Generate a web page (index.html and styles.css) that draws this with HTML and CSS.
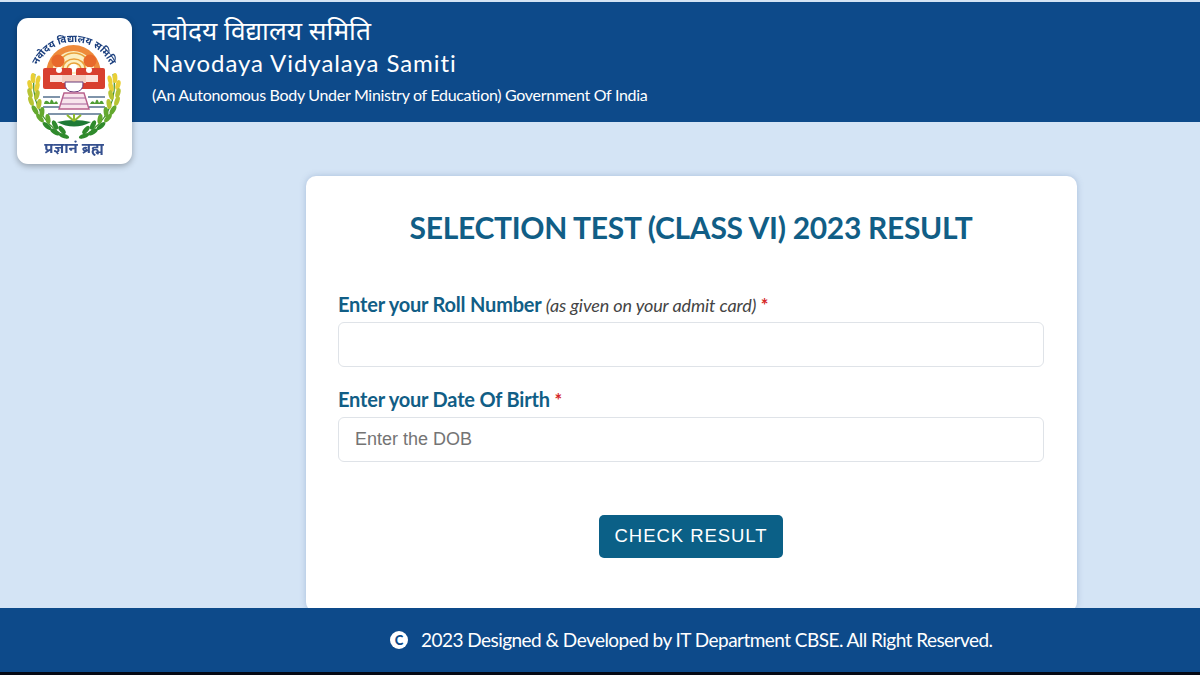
FILE: index.html
```html
<!DOCTYPE html>
<html lang="en">
<head>
<meta charset="utf-8">
<title>Navodaya Vidyalaya Samiti</title>
<link rel="stylesheet" href="styles.css">
</head>
<body>
<div class="page">
  <header class="header">
    <div class="logo-card">
      <svg class="logo" viewBox="0 0 115 146" width="115" height="146" aria-label="NVS logo">
        <defs>
          <path id="arcTop" d="M17 64 A40 40 0 0 1 97 64"/>
          <g id="wreath">
            <path d="M18 56 C13 78 22 104 50 120" fill="none" stroke="#3f8f2a" stroke-width="1.2"/>
            <g fill="#e9cf36">
              <ellipse cx="16" cy="60" rx="2.4" ry="5"/><ellipse cx="21" cy="62" rx="2.2" ry="4.6" transform="rotate(15 21 62)"/>
              <ellipse cx="13" cy="67" rx="2.4" ry="5" transform="rotate(-15 13 67)"/><ellipse cx="20" cy="69" rx="2.4" ry="5" transform="rotate(15 20 69)"/>
            </g>
            <g fill="#b7c333">
              <ellipse cx="13" cy="75" rx="2.4" ry="5" transform="rotate(-15 13 75)"/><ellipse cx="20" cy="77" rx="2.4" ry="5" transform="rotate(15 20 77)"/>
              <ellipse cx="14" cy="83" rx="2.4" ry="5" transform="rotate(-20 14 83)"/><ellipse cx="22" cy="86" rx="2.4" ry="5" transform="rotate(10 22 86)"/>
            </g>
            <g fill="#63a82e">
              <ellipse cx="18" cy="92" rx="2.4" ry="5.2" transform="rotate(-30 18 92)"/><ellipse cx="25" cy="94" rx="2.4" ry="5" transform="rotate(5 25 94)"/>
              <ellipse cx="23" cy="100" rx="2.4" ry="5.4" transform="rotate(-40 23 100)"/><ellipse cx="31" cy="101" rx="2.4" ry="5" transform="rotate(-10 31 101)"/>
            </g>
            <g fill="#2f8a2c">
              <ellipse cx="30" cy="108" rx="2.4" ry="5.4" transform="rotate(-50 30 108)"/><ellipse cx="38" cy="107" rx="2.4" ry="5" transform="rotate(-25 38 107)"/>
              <ellipse cx="38" cy="114" rx="2.4" ry="5.4" transform="rotate(-60 38 114)"/><ellipse cx="45" cy="112" rx="2.4" ry="5" transform="rotate(-40 45 112)"/>
              <ellipse cx="47" cy="118" rx="2.2" ry="5.4" transform="rotate(-70 47 118)"/>
            </g>
          </g>
        </defs>
        <text class="logo-hi"><textPath href="#arcTop" startOffset="50%" text-anchor="middle">नवोदय विद्यालय समिति</textPath></text>
        <path d="M29 56 A27.500 29 0 0 1 84 56 Z" fill="#ee8a3a"/>
        <path d="M35 56 A21.500 23 0 0 1 78 56 Z" fill="#fbeec0"/>
        <path d="M42 48 A15 13 0 0 1 72 48 M46 50 A11 9 0 0 1 68 50 M50 51 A7 6 0 0 1 64 51" fill="none" stroke="#e9a13a" stroke-width="1.6"/>
        <circle cx="41" cy="43" r="6.500" fill="#e8692b"/>
        <circle cx="73" cy="43" r="6.500" fill="#e8692b"/>
        <circle cx="56.500" cy="50" r="4" fill="#fff"/>
        <rect x="26" y="50" width="29" height="21" rx="2" fill="#d8402f"/>
        <rect x="59" y="50" width="29" height="21" rx="2" fill="#d8402f"/>
        <circle cx="42" cy="52" r="3" fill="#fff"/>
        <circle cx="72" cy="52" r="3" fill="#fff"/>
        <rect x="33" y="57" width="17" height="7" fill="#fbe3dc"/>
        <rect x="64" y="57" width="17" height="7" fill="#fbe3dc"/>
        <path d="M45 57 H69 V65 H45 Z" fill="#f5cfc2"/>
        <path d="M48 64 H66 Q67 74 57 74 Q47 74 48 64 Z" fill="#fff" stroke="#6b3a7a"/>
        <path d="M47 75 H67 L72 91 H42 Z" fill="#f8e4ec" stroke="#b8608c" stroke-width="1.4"/>
        <path d="M46 80 H68 M44 86 H70" stroke="#a26098" stroke-width="1.2"/>
        <path d="M26 79 H43 M71 79 H88 M26 89 H42 M72 89 H88 M31 96 H84" stroke="#55718f" stroke-width="1.3"/>
        <path d="M27 86 Q28 80 33 85 Q34 78 37 85 Q40 81 41 86 Z M73 86 Q75 81 78 85 Q80 78 82 85 Q85 80 87 86 Z" fill="#4f9d35"/>
        <path d="M40 104 Q57 113 74 104 Q57 100 40 104 Z" fill="#1f7a36"/>
        <path d="M57 103 V96 M57 103 L50 97 M57 103 L64 97" stroke="#8db82e" stroke-width="2" fill="none"/>
        <use href="#wreath"/>
        <use href="#wreath" transform="translate(114 0) scale(-1 1)"/>
        <text class="logo-motto" x="57" y="135" text-anchor="middle">प्रज्ञानं ब्रह्म</text>
      </svg>
    </div>
    <div class="brand">
      <div class="brand-hi">नवोदय विद्यालय समिति</div>
      <div class="brand-en">Navodaya Vidyalaya Samiti</div>
      <div class="brand-sub">(An Autonomous Body Under Ministry of Education) Government Of India</div>
    </div>
  </header>
  <main class="main">
    <form class="card">
      <h1 class="title">SELECTION TEST (CLASS VI) 2023 RESULT</h1>
      <div class="field field-first">
        <label class="label">Enter your Roll Number <em class="hint">(as given on your admit card)</em> <span class="req">*</span></label>
        <input class="input" type="text">
      </div>
      <div class="field">
        <label class="label">Enter your Date Of Birth <span class="req">*</span></label>
        <input class="input" type="text" placeholder="Enter the DOB">
      </div>
      <div class="actions"><button class="btn" type="button">CHECK RESULT</button></div>
    </form>
  </main>
  <footer class="footer">
    <span class="copy">C</span>
    <span class="foot-text">2023 Designed &amp; Developed by IT Department CBSE. All Right Reserved.</span>
  </footer>
</div>
</body>
</html>
```
FILE: styles.css
```css
* { box-sizing: border-box; }
html, body { margin: 0; padding: 0; }
body { font-family: Lato, "Noto Sans", sans-serif; background: #d4e4f5; overflow: hidden; }
.page { width: 1200px; height: 675px; display: flex; flex-direction: column; background: #d4e4f5; border-top: 2px solid #d4e4f5; border-bottom: 3px solid #050a14; }
.header { position: relative; height: 120px; flex: none; background: #0d4a8a; padding: 12px 0 0 152px; color: #fff; }
.logo-card { position: absolute; left: 17px; top: 16px; width: 115px; height: 146px; background: #fff; border-radius: 11px; box-shadow: 0 2px 6px rgba(0,0,0,.3); z-index: 2; }
.logo { display: block; filter: blur(.35px); }
.logo-hi { font-family: "Noto Sans", "Noto Sans CJK SC", sans-serif; font-size: 10px; font-weight: 700; fill: #1b3f7e; }
.logo-motto { font-family: "Noto Sans", "Noto Sans CJK SC", sans-serif; font-size: 15px; font-weight: 700; fill: #35508f; }
.brand { display: flex; flex-direction: column; }
.brand-hi { font-family: "Noto Sans", "Noto Sans CJK SC", sans-serif; font-size: 26.3px; line-height: 32px; height: 32px; }
.brand-en { font-size: 24px; line-height: 32px; letter-spacing: .93px; margin-top: 1px; }
.brand-sub { font-size: 16px; line-height: 20px; margin-top: 6px; letter-spacing: -.3px; }
.main { flex: 1; min-height: 0; overflow: hidden; padding: 54px 0 0 306px; }
.card { width: 771px; height: 436px; background: #fff; border-radius: 10px; box-shadow: 0 0 6px rgba(90,120,170,.35); padding: 31px 33px 0 32px; }
.title { margin: 0; text-align: center; color: #115e86; font-size: 30px; font-weight: 700; line-height: 40px; letter-spacing: -.3px; }
.field { display: flex; flex-direction: column; margin-top: 20px; }
.field-first { margin-top: 45px; }
.label { color: #115e86; font-size: 20px; font-weight: 700; line-height: 24px; margin-bottom: 5px; letter-spacing: -.2px; }
.hint { color: #444; font-size: 18px; font-weight: 400; letter-spacing: -.1px; }
.req { color: #d62828; font-size: 18px; }
.input { display: block; width: 100%; height: 45px; border: 1px solid #dfe3e8; border-radius: 6px; padding: 0 16px; font-family: "Liberation Sans", Arial, sans-serif; font-size: 18px; color: #333; background: #fff; outline: none; }
.input::placeholder { color: #747474; opacity: 1; }
.actions { display: flex; justify-content: center; margin-top: 53px; }
.btn { width: 184px; height: 43px; border: 0; border-radius: 5px; padding: 0 0 2px; background: #0b6087; color: #fff; font-family: "Liberation Sans", Arial, sans-serif; font-size: 18.5px; letter-spacing: .95px; }
.footer { height: 64px; flex: none; background: #0d4a8a; color: #fff; display: flex; align-items: center; padding-left: 390px; gap: 13px; }
.copy { width: 18px; height: 18px; border-radius: 50%; background: #fff; color: #0d4a8a; font-size: 13px; font-weight: 900; display: flex; align-items: center; justify-content: center; }
.foot-text { font-size: 19px; letter-spacing: -.54px; margin-bottom: 2px; }
```
